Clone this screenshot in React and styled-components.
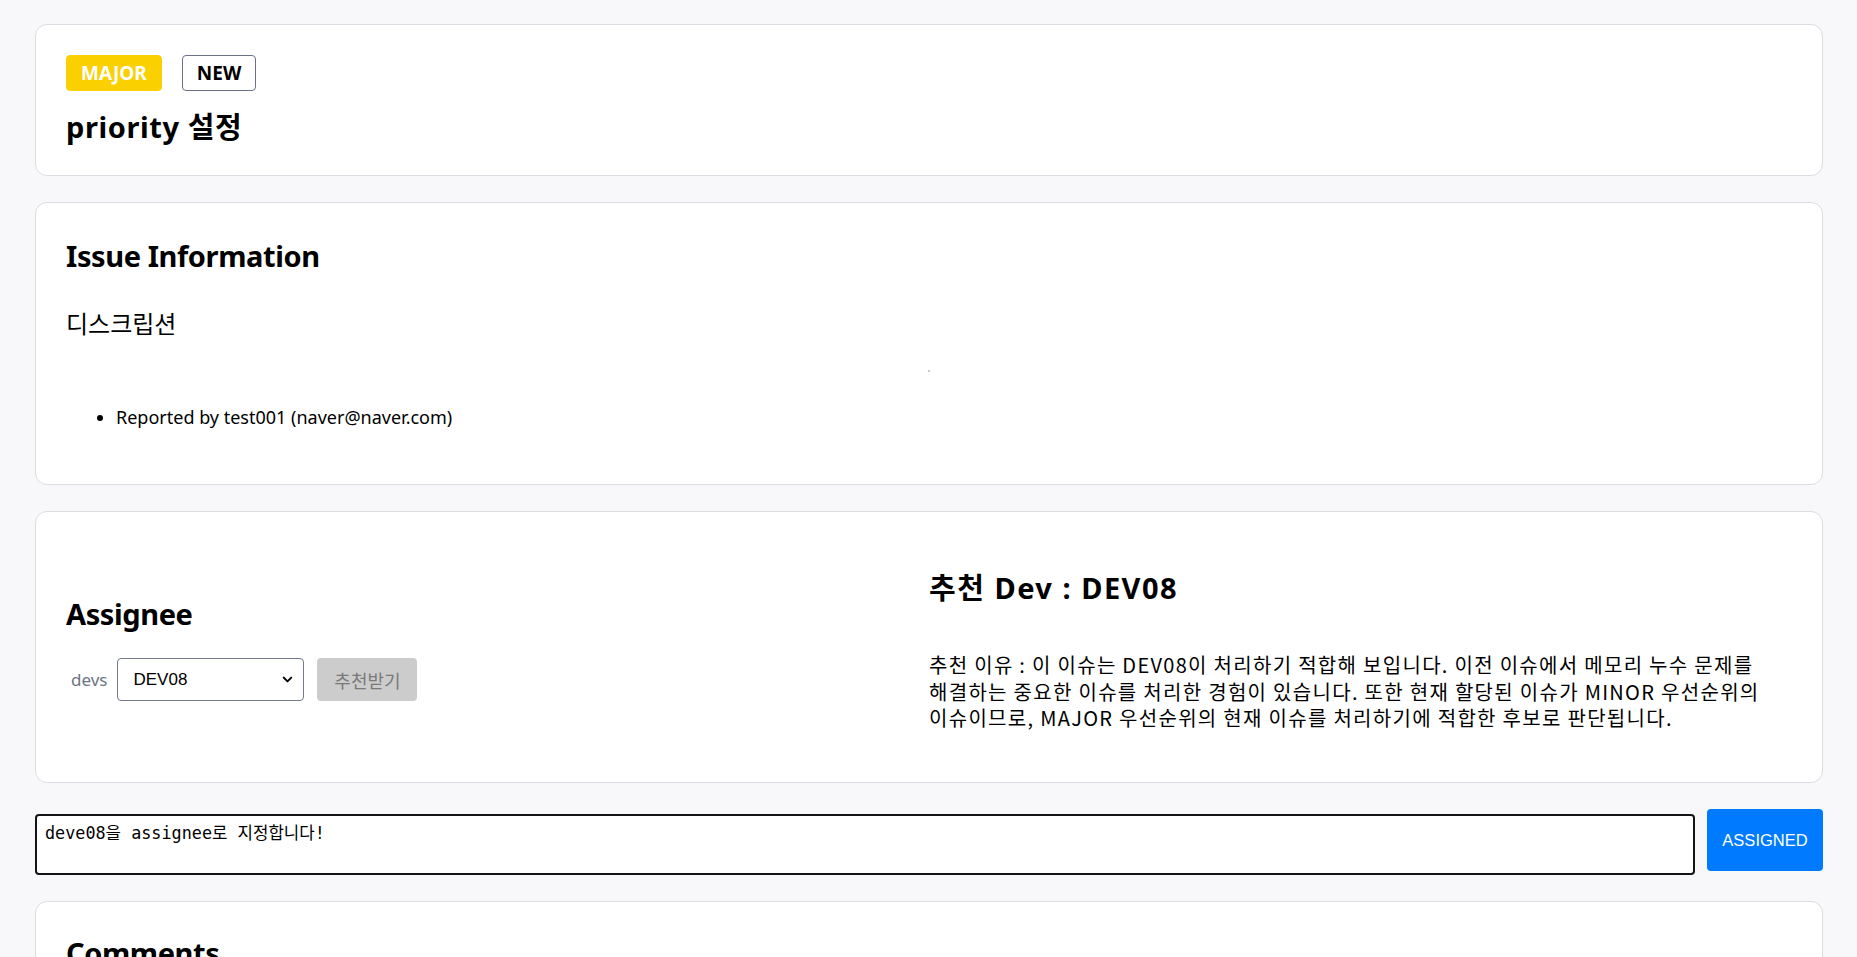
import React from "react";
import styled, { createGlobalStyle } from "styled-components";
import { ChevronDown } from "lucide-react";

const GlobalStyle = createGlobalStyle`
  html {
    scrollbar-width: none;
  }
  html::-webkit-scrollbar {
    display: none;
  }
  body {
    margin: 0;
    background: #f8f8fa;
    color: #000;
    font-family: "Noto Sans", "Noto Sans CJK KR", sans-serif;
  }
  * {
    box-sizing: border-box;
  }
`;

const Page = styled.div`
  display: flex;
  flex-direction: column;
  gap: 26px;
  padding: 24px 34px 60px 35px;
`;

const Card = styled.section`
  background: #fff;
  border: 1px solid #dcdce3;
  border-radius: 12px;
  padding: ${(p) => p.$pad || "30px"};
`;

const BadgeRow = styled.div`
  display: flex;
  gap: 20px;
`;

const Badge = styled.span`
  display: inline-flex;
  align-items: center;
  height: 36px;
  padding: 0 14px;
  border-radius: 4px;
  font-size: 19px;
  font-weight: 700;
  background: ${(p) => (p.$filled ? "#fbd000" : "#fff")};
  color: ${(p) => (p.$filled ? "#fff" : "#000")};
  border: 1px solid ${(p) => (p.$filled ? "#fbd000" : "#6b7185")};
`;

const Title = styled.h2`
  margin: ${(p) => p.$margin || "0"};
  font-size: 29px;
  line-height: 36px;
  font-weight: 700;
  letter-spacing: ${(p) => p.$spacing || "-0.4px"};
`;

const Description = styled.div`
  margin-top: 34px;
  font-family: "Noto Sans CJK KR", sans-serif;
  font-size: 24px;
  line-height: 29px;
`;

const ImageBox = styled.div`
  height: 68px;
  display: flex;
  align-items: center;
  justify-content: center;

  > span {
    width: 2px;
    height: 2px;
    background: #c9c9c9;
  }
`;

const Reporters = styled.ul`
  margin: 0 0 25px;
  padding-left: 50px;
  font-size: 18px;
  line-height: 24px;
`;

const Columns = styled.div`
  display: grid;
  grid-template-columns: 1fr 1fr;
  align-items: center;
  min-height: 161px;
`;

const PickRow = styled.div`
  display: flex;
  align-items: center;
  margin: 26px 0 5px;
  padding-left: 5px;
`;

const Label = styled.span`
  font-size: 17px;
  color: #6c7486;
  margin-right: 10px;
`;

const SelectWrap = styled.div`
  position: relative;
  width: 187px;
  height: 43px;

  > svg {
    position: absolute;
    right: 9px;
    top: 14px;
    pointer-events: none;
  }
`;

const Select = styled.select`
  appearance: none;
  width: 100%;
  height: 100%;
  padding: 0 30px 0 15px;
  border: 1px solid #767b8c;
  border-radius: 4px;
  background: #fff;
  font-family: "Liberation Sans", Arial, sans-serif;
  font-size: 17px;
  color: #000;
`;

const Button = styled.button`
  border: none;
  border-radius: 4px;
  cursor: pointer;
  background: ${(p) => (p.$primary ? "#007bff" : "#cccccc")};
  color: ${(p) => (p.$primary ? "#fff" : "#7a7a7a")};
  font-family: ${(p) =>
    p.$primary ? '"Liberation Sans", Arial, sans-serif' : '"Noto Sans CJK KR", sans-serif'};
  font-size: ${(p) => (p.$primary ? "16.5px" : "18px")};
`;

const RecommendButton = styled(Button)`
  margin-left: 13px;
  width: 100px;
  height: 43px;
`;

const Reason = styled.p`
  margin: 46px 0 0;
  font-family: "Noto Sans CJK KR", sans-serif;
  font-size: 20px;
  line-height: 26.7px;
  letter-spacing: 1.3px;
  word-break: keep-all;
`;

const AssignRow = styled.div`
  display: flex;
  align-items: flex-start;
  gap: 12px;
`;

const Memo = styled.textarea`
  flex: 1;
  height: 61px;
  margin-top: 5px;
  padding: 6px 8px;
  border: 2px solid #141414;
  border-radius: 4px;
  resize: none;
  outline: none;
  font-family: "DejaVu Sans Mono", "Noto Sans CJK KR", monospace;
  font-size: 16.8px;
  line-height: 22px;
  color: #000;
  background: #fff;
`;

const AssignButton = styled(Button)`
  width: 116px;
  height: 62px;
`;

const CommentArea = styled.div`
  height: 160px;
`;

export default function App() {
  return (
    <>
      <GlobalStyle />
      <Page>
        <Card>
          <BadgeRow>
            <Badge $filled>MAJOR</Badge>
            <Badge>NEW</Badge>
          </BadgeRow>
          <Title $margin="18px 0 0" $spacing="0.6px">
            priority 설정
          </Title>
        </Card>

        <Card>
          <Title $margin="5px 0 0">Issue Information</Title>
          <Description>디스크립션</Description>
          <ImageBox>
            <span />
          </ImageBox>
          <Reporters>
            <li>Reported by test001 (naver@naver.com)</li>
          </Reporters>
        </Card>

        <Card $pad="58px 30px 50px">
          <Columns>
            <div>
              <Title>Assignee</Title>
              <PickRow>
                <Label>devs</Label>
                <SelectWrap>
                  <Select defaultValue="DEV08">
                    <option>DEV01</option>
                    <option>DEV02</option>
                    <option>DEV08</option>
                  </Select>
                  <ChevronDown size={15} strokeWidth={3.2} />
                </SelectWrap>
                <RecommendButton>추천받기</RecommendButton>
              </PickRow>
            </div>
            <div>
              <Title $spacing="1.5px">추천 Dev : DEV08</Title>
              <Reason>
                추천 이유 : 이 이슈는 DEV08이 처리하기 적합해 보입니다. 이전 이슈에서 메모리 누수
                문제를 해결하는 중요한 이슈를 처리한 경험이 있습니다. 또한 현재 할당된 이슈가 MINOR
                우선순위의 이슈이므로, MAJOR 우선순위의 현재 이슈를 처리하기에 적합한 후보로
                판단됩니다.
              </Reason>
            </div>
          </Columns>
        </Card>

        <AssignRow>
          <Memo defaultValue="deve08을 assignee로 지정합니다!" />
          <AssignButton $primary>ASSIGNED</AssignButton>
        </AssignRow>

        <Card>
          <Title $margin="3px 0 0">Comments</Title>
          <CommentArea />
        </Card>
      </Page>
    </>
  );
}
